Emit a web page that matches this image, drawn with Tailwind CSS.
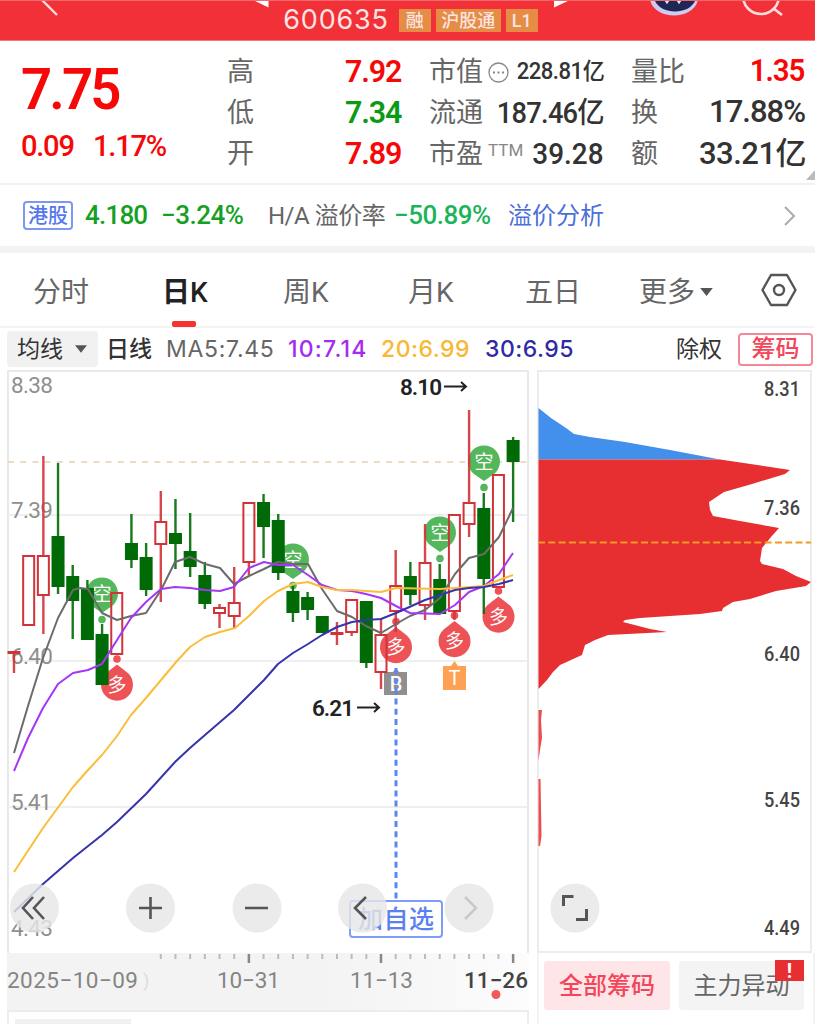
<!DOCTYPE html>
<html lang="zh-CN">
  <head>
    <meta charset="UTF-8" />
    <meta name="viewport" content="width=device-width, initial-scale=1.0" />
    <title>600635</title>
    <script src="https://cdn.jsdelivr.net/npm/@tailwindcss/browser@4"></script>
  </head>
  <body class="w-[815px] h-[1024px] overflow-hidden bg-white font-['Roboto','Noto_Sans_CJK_SC',sans-serif] text-[#333] whitespace-nowrap">
    <!-- Title bar -->
    <header class="relative flex h-[41px] justify-center border-t border-[#f4686c] bg-[#f13037] border-b border-b-[#f77a7e]">
      <div class="flex h-[38px] items-center gap-[5px] pl-[6px] text-[#fbe4e2]">
        <span class="mr-[5px] font-['Inter'] text-[27px] tracking-[0.8px]">600635</span>
        <span class="flex h-[23px] w-[32px] items-center justify-center bg-[#e58c45] text-[18px] font-medium">融</span>
        <span class="flex h-[23px] w-[65px] items-center justify-center bg-[#e58c45] text-[18px] font-medium">沪股通</span>
        <span class="flex h-[23px] w-[32px] items-center justify-center bg-[#e58c45] text-[18px] font-medium">L1</span>
      </div>
      <svg class="absolute inset-0" width="815" height="40" viewBox="0 0 815 40" fill="none">
        <path d="M41-2L57 14" stroke="#fbdcdd" stroke-width="2.4" />
        <path d="M253-1H268.500V6.500Z" fill="#fff" />
        <path d="M554-1H570L554 6.500Z" fill="#fff" />
        <path d="M650-2C653 20 695 20 698-2Z" fill="#cfcaf0" />
        <path d="M654-3C658 15 692 15 696-3Z" fill="#1d2856" />
        <path d="M665-2l2 3 2-3M677-2l2 3 2-3" stroke="#dfe3ff" stroke-width="2.500" />
        <circle cx="761" cy="-5" r="18" stroke="#fdd" stroke-width="2.600" />
        <path d="M773 7L782 14" stroke="#fdd" stroke-width="2.600" />
      </svg>
    </header>

    <!-- Quote summary -->
    <section class="relative flex h-[144px] border-b-2 border-[#f1f1f1] pl-[21px] pt-[11px]">
      <div class="w-[206px] text-[#f70808]">
        <div class="mt-[7px] h-[60px] origin-left scale-x-[0.94] text-[58px] leading-[60px] font-semibold tracking-[-3px]">7.75</div>
        <div class="mt-[11px] flex origin-left scale-x-[0.97] gap-[20px] text-[30px] leading-[32px] font-medium tracking-[-1.300px]"><span>0.09</span><span>1.17%</span></div>
      </div>
      <div class="grid h-[123px] w-[175px] grid-rows-3 text-[32px] font-semibold">
        <div class="flex items-center justify-between"><span class="text-[27px] font-normal text-[#666]">高</span><span class="mr-px -mt-[3px] origin-right scale-x-[0.95] tracking-[-1.200px] text-[#f70808]">7.92</span></div>
        <div class="flex items-center justify-between"><span class="text-[27px] font-normal text-[#666]">低</span><span class="mr-px -mt-[3px] origin-right scale-x-[0.95] tracking-[-1.200px] text-[#0a9b14]">7.34</span></div>
        <div class="flex items-center justify-between"><span class="text-[27px] font-normal text-[#666]">开</span><span class="mr-px -mt-[3px] origin-right scale-x-[0.95] tracking-[-1.200px] text-[#f70808]">7.89</span></div>
      </div>
      <div class="ml-[27px] grid h-[123px] w-[175px] grid-rows-3 text-[30px] font-medium">
        <div class="flex items-center justify-between">
          <span class="flex items-center text-[27px] font-normal text-[#666]">市值
            <svg class="ml-[5px]" width="21" height="21" viewBox="0 0 21 21" fill="none"><circle cx="10.500" cy="10.500" r="9.500" stroke="#888" stroke-width="1.300" /><path d="M5 10.500h2m2.500 0h2m2.500 0h2" stroke="#888" stroke-width="2" /></svg>
          </span>
          <span class="origin-right scale-x-[0.96] text-[23px] tracking-[-0.500px]">228.81亿</span>
        </div>
        <div class="flex items-center justify-between"><span class="text-[27px] font-normal text-[#666]">流通</span><span class="origin-right scale-x-[0.94] text-[29px] tracking-[-0.800px]">187.46亿</span></div>
        <div class="flex items-center justify-between">
          <span class="flex items-center text-[27px] font-normal text-[#666]">市盈<span class="ml-[5px] mb-[8px] text-[17px] text-[#888]">TTM</span></span>
          <span class="-mt-[3px] origin-right scale-x-[0.93]">39.28</span>
        </div>
      </div>
      <div class="ml-[27px] grid h-[123px] w-[175px] grid-rows-3 text-[31px] font-medium">
        <div class="flex items-center justify-between"><span class="text-[27px] font-normal text-[#666]">量比</span><span class="mr-[2px] -mt-[2px] origin-right scale-x-[0.95] font-semibold tracking-[-1.200px] text-[#f70808]">1.35</span></div>
        <div class="flex items-center justify-between"><span class="text-[27px] font-normal text-[#666]">换</span><span class="mr-px -mt-[2px] tracking-[-1px]">17.88%</span></div>
        <div class="flex items-center justify-between"><span class="text-[27px] font-normal text-[#666]">额</span><span class="tracking-[-0.500px]">33.21亿</span></div>
      </div>
      <svg class="absolute right-0 bottom-[3px]" width="9" height="10" viewBox="0 0 9 10"><path d="M9 0V10H0Z" fill="#bbb" /></svg>
    </section>

    <!-- H share row -->
    <section class="flex h-[61px] items-center pl-[23px] text-[26px] font-medium">
      <span class="flex h-[29px] w-[50px] items-center justify-center rounded-[4px] border-2 border-[#7d97f4] text-[20px] text-[#5577ee]">港股</span>
      <span class="ml-[12px] w-[76px] tracking-[-0.800px] text-[#14a022]">4.180</span>
      <span class="w-[107px] tracking-[-0.500px] text-[#14a022]">−3.24%</span>
      <span class="w-[126px] text-[24px] font-normal tracking-[-0.500px] text-[#666]">H/A 溢价率</span>
      <span class="w-[114px] tracking-[-0.500px] text-[#1cb45a]">−50.89%</span>
      <span class="text-[24px] font-normal text-[#4d6fd9]">溢价分析</span>
      <svg class="ml-auto mr-[19px]" width="13" height="20" viewBox="0 0 13 20" fill="none"><path d="M2 1L11 10L2 19" stroke="#aaa" stroke-width="2" /></svg>
    </section>

    <!-- Period tabs -->
    <nav class="relative flex h-[82px] items-center border-t-[7px] border-b-2 border-t-[#f3f3f3] border-b-[#f3f3f3] pl-[33px] pt-[6px] text-[28px] text-[#666]">
      <span class="w-[129px]">分时</span>
      <span class="relative w-[121px] font-bold text-[#222]">日<span class="font-medium">K</span></span>
      <span class="w-[125px]">周K</span>
      <span class="w-[117px]">月K</span>
      <span class="w-[114px]">五日</span>
      <span class="flex items-center">更多<svg class="ml-[5px]" width="13" height="9" viewBox="0 0 14 10"><path d="M0 0H14L7 9Z" fill="#555" /></svg></span>
      <svg class="mt-[-5px] ml-auto mr-[18px]" width="36" height="34" viewBox="0 0 36 34" fill="none" stroke="#555" stroke-width="2.400"><path d="M10 2H26L34.500 17L26 32H10L1.500 17Z" stroke-linejoin="round" /><circle cx="18" cy="17" r="5" /></svg>
      <i class="absolute bottom-[-1px] left-[172px] h-[6px] w-[24px] rounded-[2px] bg-[#f5322f]"></i>
    </nav>

    <!-- Moving average legend -->
    <section class="flex h-[42px] items-center pl-[7px] font-['Inter','Noto_Sans_CJK_SC',sans-serif] text-[23px]">
      <span class="flex h-[36px] w-[91px] items-center rounded-[4px] bg-[#f1f1f1] pl-[10px]">均线<svg class="ml-[12px]" width="12" height="8" viewBox="0 0 14 9"><path d="M0 0H14L7 9Z" fill="#555" /></svg></span>
      <span class="ml-[8px] w-[60px] font-medium">日线</span>
      <span class="w-[122px] tracking-[0.700px] text-[#666]">MA5:7.45</span>
      <span class="w-[93px] font-medium tracking-[1.200px] text-[#a62af0]">10:7.14</span>
      <span class="w-[104px] font-medium tracking-[0.500px] text-[#f8b833]">20:6.99</span>
      <span class="font-medium tracking-[0.500px] text-[#3029a6]">30:6.95</span>
      <span class="ml-auto mr-[16px]">除权</span>
      <span class="mr-[2px] flex h-[33px] w-[75px] items-center justify-center rounded-[4px] border-2 border-[#f78794] text-[24px] font-medium text-[#f4465a]">筹码</span>
    </section>

    <main class="flex h-[654px] bg-white">
      <!-- K line chart -->
      <div class="ml-[7px] flex w-[522px] flex-col">
        <svg id="kline" class="block shrink-0" width="522" height="583" viewBox="7 370 522 583" fill="none">
          <path d="M8 953V371H528V953" stroke="#e9e9e9" stroke-width="2" />
          <path d="M8 515H527M8 661H527M8 807H527" stroke="#efefef" stroke-width="2" />
          <path d="M8 462H527" stroke="#e8cfae" stroke-width="1.600" stroke-dasharray="6 6.200" />
          <g fill="#8f8f8f" font-family="Roboto" font-size="22.500">
            <text x="11" y="393" textLength="42">8.38</text>
            <text x="11" y="518" textLength="42">7.39</text>
            <text x="11" y="664" textLength="42">6.40</text>
            <text x="11" y="810" textLength="41">5.41</text>
            <text x="11" y="936" textLength="42">4.43</text>
          </g>
          <g id="pins"></g>
          <g>
            <path d="M393 672L396 668L399 672H407V695H384V672Z" fill="#8f8f8f" />
            <text x="396" y="691" fill="#fff" font-family="Roboto" font-size="20" font-weight="500" text-anchor="middle">B</text>
            <path d="M451 666L454.500 661L458 666H466V690H443V666Z" fill="#ffa155" />
            <text x="454.500" y="685" fill="#fff" font-family="Roboto" font-size="20" text-anchor="middle">T</text>
          </g>
          <g id="candles"></g>
          <g stroke-width="2" stroke-linejoin="round">
            <polyline stroke="#6b6b6b" points="14,753 28,706 43,658 58,618 73,590 80,588 88,589 102,613 117,620 131,616 146,613 161,590 175,562 190,557 205,564 220,568 234,584 249,576 264,569 278,562 293,564 308,564 322,589 337,611 352,617 366,626 381,633 396,624 410,616 425,610 440,598 455,574 469,558 484,554 499,537 513,508" />
            <polyline stroke="#a636f5" points="14,771 28,738 43,708 58,684 73,673 88,670 102,664 117,640 131,618 146,602 161,589 175,587 190,588 205,590 220,591 234,587 249,568 264,562 278,565 293,565 308,575 322,585 337,590 352,591 366,594 381,598 396,606 410,613 440,614 455,605 469,592 484,586 499,574 513,553" />
            <polyline stroke="#fbbd3c" points="14,872 43,828 73,787 88,770 102,755 117,736 131,715 146,698 161,680 177,661 190,647 205,637 220,632 235,628 249,616 264,601 278,591 293,584 308,582 322,587 337,590 352,590 366,591 381,592 396,588 440,589 455,588 484,586 499,580 513,575" />
            <polyline stroke="#3634ac" points="14,912 43,884 73,858 102,835 117,822 146,794 175,762 190,748 205,735 234,710 264,680 278,664 293,653 308,644 322,635 337,627 352,622 366,620 381,619 396,613 425,600 440,595 455,590 469,588 484,587 499,584 513,580" />
          </g>
          <path d="M396 668V900" stroke="#5b87f5" stroke-width="3" stroke-dasharray="6 4.200" />
          <g fill="#222" font-family="Roboto" font-size="22.500" font-weight="600">
            <text x="400" y="395" textLength="42">8.10</text>
            <text x="312" y="716" textLength="42">6.21</text>
          </g>
          <path d="M444 386.500H466M461 382L466 386.500L461 391M357 707.500H379M374 703L379 707.500L374 712" stroke="#222" stroke-width="2" />
          <!-- Add to watchlist tag -->
          <rect x="350" y="901" width="92" height="36" rx="3" fill="#fff" stroke="#7d9df8" stroke-width="2" />
          <text x="358" y="928" fill="#5b80ef" font-family="Noto Sans CJK SC" font-size="25" font-weight="500" textLength="76">加自选</text>
          <g fill="#e6e6e6" fill-opacity="0.820">
            <circle cx="34.500" cy="908" r="24.500" />
            <circle cx="150.500" cy="908" r="24.500" />
            <circle cx="257" cy="908" r="24.500" />
            <circle cx="362.500" cy="908" r="24.500" />
            <circle cx="469" cy="908" r="24.500" />
          </g>
          <g stroke="#555" stroke-width="2.600">
            <path d="M33 897L23 908L33 919M44 897L34 908L44 919" />
            <path d="M139 908H162M150.500 897V919M245 908H268" />
            <path d="M366 897L355 908L366 919" />
            <path d="M465 897L476 908L465 919" stroke="#c9c9c9" />
          </g>
        </svg>
        <!-- Date axis -->
        <svg id="axis" class="block shrink-0" width="522" height="57" viewBox="7 953 522 57">
          <defs>
            <linearGradient id="axisBg" x1="0" x2="1"><stop offset="0" stop-color="#f3f3f3" /><stop offset="0.600" stop-color="#f3f3f3" /><stop offset="1" stop-color="#fcfcfc" /></linearGradient>
          </defs>
          <rect x="7" y="953" width="522" height="57" fill="url(#axisBg)" />
          <g id="ticks"></g>
          <g fill="#858585" font-family="Roboto" font-size="22.500">
            <text x="7" y="988" textLength="131">2025−10−09</text>
            <text x="217" y="988" textLength="63">10−31</text>
            <text x="350" y="988" textLength="63">11−13</text>
            <text x="464" y="988" textLength="64" fill="#444" font-weight="500">11−26</text>
          </g>
          <text x="143" y="987" fill="#ddd" font-family="Roboto" font-size="18">)</text>
          <circle cx="496" cy="994.500" r="4.500" fill="#f05a5a" />
        </svg>
        <div class="h-[14px] border-2 border-b-0 border-[#ececec] px-[6px] pt-[7px]"><div class="h-[6px] w-[116px] bg-[#f0f0f0]"></div></div>
      </div>

      <!-- Chip distribution -->
      <div class="ml-[8px] flex w-[278px] flex-col">
        <svg class="block shrink-0" width="278" height="583" viewBox="537 370 278 583" fill="none">
          <path d="M538 371H811V952H538Z" stroke="#ececec" stroke-width="2" />
          <path d="M538.500 408L551 418L566 428L574 434L590 437L625 442L670 450L720 459.500H538.500Z" fill="#438fec" />
          <path d="M538.500 459.500H720L790 470L785 474L752 484L724 492L709 502L710 510L713 516L740 521L779 528L771 537L762 548L760 561L762 564L783 569L796 576L811 582L806 586L776 591L750 599L733 602L723 608L722 611L700 614L640 618L625 620L623 622L650 629L667 632L608 635L595 640L585 645L582 655L560 665L553 672L547 680L538.500 689Z" fill="#e72e30" />
          <path d="M538.500 710H542L541 720L542 738L540 750L538.500 761ZM538.500 779H540.500L541.500 836L540 846H538.500Z" fill="#e72e30" fill-opacity="0.850" />
          <path d="M538 542.500H811" stroke="#f39a26" stroke-width="2" stroke-dasharray="7 3.300" />
          <g fill="#444" font-family="Roboto" font-size="20.500" font-weight="500">
            <text x="764" y="396" textLength="36" lengthAdjust="spacingAndGlyphs">8.31</text>
            <text x="764" y="515" textLength="36" lengthAdjust="spacingAndGlyphs">7.36</text>
            <text x="764" y="661" textLength="36" lengthAdjust="spacingAndGlyphs">6.40</text>
            <text x="764" y="807" textLength="36" lengthAdjust="spacingAndGlyphs">5.45</text>
            <text x="764" y="935" textLength="36" lengthAdjust="spacingAndGlyphs">4.49</text>
          </g>
          <circle cx="575" cy="908" r="24.500" fill="#ebebeb" />
          <path d="M563.500 906V896.500H573.500M586.500 909V919.500H576" stroke="#555" stroke-width="3" />
        </svg>
        <div class="flex h-[71px] gap-[9px] border-x-2 border-[#f3f3f3] pl-[5px] pt-[8px] text-[24px]">
          <span class="flex h-[49px] w-[126px] items-center justify-center rounded-[3px] bg-[#fee5e8] font-medium text-[#f4465a]">全部筹码</span>
          <span class="relative flex h-[49px] w-[125px] items-center justify-center rounded-[3px] bg-[#f4f4f4] text-[#666]">主力异动
            <i class="absolute -top-px right-0 flex h-[21px] w-[29px] items-center justify-center bg-[#e72e30] text-[20px] font-bold text-white not-italic">!</i>
          </span>
        </div>
      </div>
    </main>

    <script>
      const NS = 'http://www.w3.org/2000/svg';

      function add(parent, tag, attrs, text) {
        const el = document.createElementNS(NS, tag);
        for (const key in attrs) el.setAttribute(key, attrs[key]);
        if (text) el.textContent = text;
        parent.appendChild(el);
      }

      // type, high, body top, body bottom, low
      const candles = [
        ['r', 652, 652, 653, 673], ['r', 556, 556, 625, 625], ['r', 456, 556, 595, 634], ['g', 463, 536, 587, 594],
        ['g', 565, 576, 601, 639], ['g', 580, 588, 640, 640], ['g', 624, 634, 685, 685], ['r', 593, 593, 654, 654],
        ['g', 514, 543, 560, 568], ['g', 543, 557, 590, 596], ['r', 491, 522, 544, 602], ['g', 499, 533, 544, 569],
        ['g', 513, 551, 567, 577], ['g', 562, 575, 604, 609], ['r', 604, 608, 613, 628], ['r', 567, 603, 616, 628],
        ['r', 503, 503, 562, 575], ['g', 494, 502, 527, 558], ['g', 514, 520, 573, 580], ['g', 586, 591, 613, 622],
        ['g', 592, 597, 610, 620], ['g', 616, 616, 633, 633], ['r', 622, 633, 634, 645], ['r', 600, 600, 632, 636],
        ['g', 601, 601, 663, 668], ['r', 618, 635, 672, 689], ['r', 550, 586, 611, 632], ['g', 562, 576, 595, 605],
        ['r', 524, 563, 605, 620], ['g', 564, 579, 614, 614], ['r', 515, 515, 611, 620], ['r', 410, 503, 524, 537],
        ['g', 493, 508, 579, 614], ['r', 475, 475, 587, 587], ['g', 437, 440, 462, 522],
      ];
      const candleLayer = document.getElementById('candles');
      candles.forEach(([type, high, top, bottom, low], i) => {
        const x = 14 + i * 14.68;
        const color = type === 'r' ? '#d23338' : '#006a06';
        add(candleLayer, 'path', { d: `M${x} ${high}V${top}M${x} ${bottom}V${low}`, stroke: color, 'stroke-width': 2.4, 'stroke-opacity': 0.9 });
        if (type === 'r') {
          add(candleLayer, 'rect', { x: x - 5.5, y: top, width: 11, height: bottom - top, stroke: color, 'stroke-width': 2 });
        } else {
          add(candleLayer, 'rect', { x: x - 6.5, y: top, width: 13, height: bottom - top, fill: color });
        }
      });

      // short / long signals
      const pinLayer = document.getElementById('pins');
      [[102, 594], [293, 560], [440, 533], [484, 462]].forEach(([x, y]) => {
        add(pinLayer, 'path', { d: `M${x} ${y + 19}L${x - 10} ${y + 12}A16 16 0 1 1 ${x + 10} ${y + 12}Z`, fill: '#55b75b' });
        add(pinLayer, 'circle', { cx: x, cy: y + 25.5, r: 3.8, fill: '#55b75b' });
        add(pinLayer, 'text', { x, y: y + 7, fill: '#fff', 'font-size': 19, 'font-family': 'Noto Sans CJK SC', 'text-anchor': 'middle' }, '空');
      });
      [[117, 684.5], [396, 647], [454.5, 641], [498.5, 616.5]].forEach(([x, y]) => {
        add(pinLayer, 'path', { d: `M${x} ${y - 20}L${x - 9} ${y - 13}A16 16 0 1 0 ${x + 9} ${y - 13}Z`, fill: '#ed5356' });
        add(pinLayer, 'circle', { cx: x, cy: y - 25.5, r: 3.8, fill: '#ed5356' });
        add(pinLayer, 'text', { x, y: y + 7, fill: '#fff', 'font-size': 19, 'font-family': 'Noto Sans CJK SC', 'text-anchor': 'middle' }, '多');
      });

      const tickLayer = document.getElementById('ticks');
      for (let i = 10; i < 35; i++) {
        const major = i === 16 || i === 25 || i === 34;
        add(tickLayer, 'path', { d: `M${14 + i * 14.68} 954V${major ? 963 : 959}`, stroke: major ? '#888' : '#bbb', 'stroke-width': major ? 2.5 : 2 });
      }
    </script>
  </body>
</html>
